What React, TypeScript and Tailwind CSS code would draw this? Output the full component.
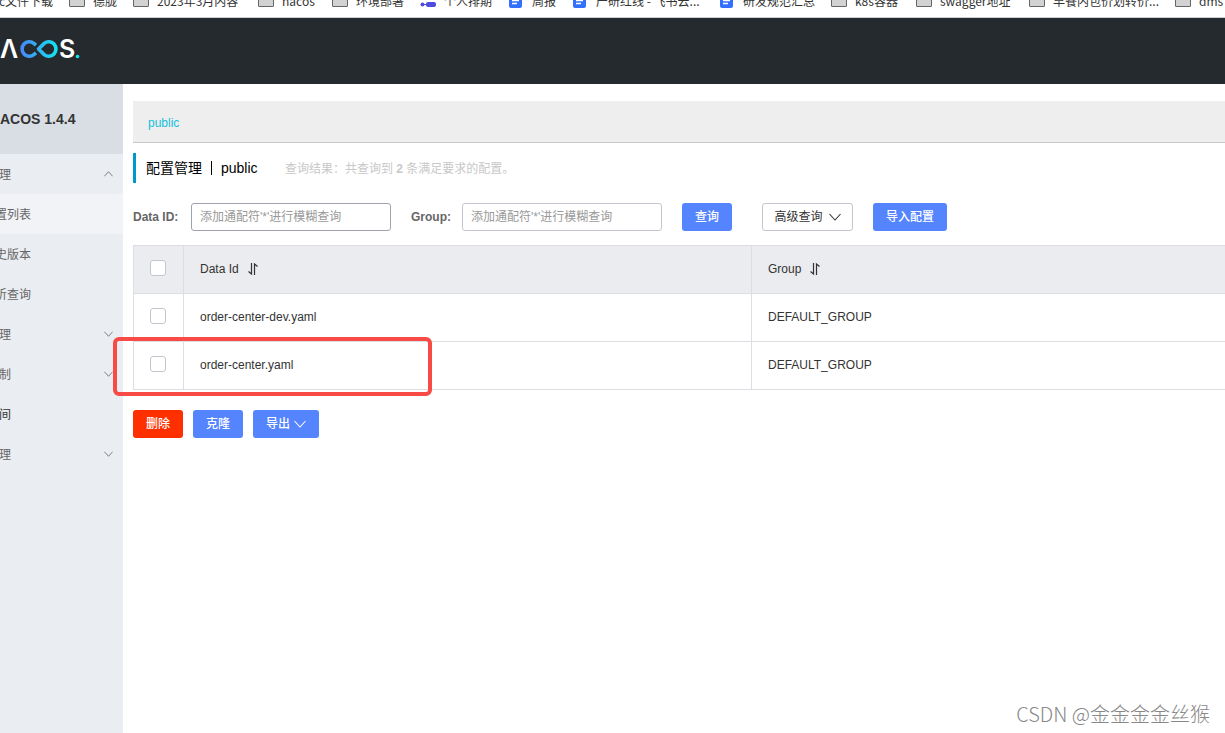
type Bookmark = { label: string; icon: 'folder' | 'doc' | 'plan'; width: string };

const bookmarks: Bookmark[] = [
  { label: '德胧', icon: 'folder', width: 'w-[64px]' },
  { label: '2023年3月内容', icon: 'folder', width: 'w-[125px]' },
  { label: 'nacos', icon: 'folder', width: 'w-[74px]' },
  { label: '环境部署', icon: 'folder', width: 'w-[88px]' },
  { label: '个人排期', icon: 'plan', width: 'w-[88px]' },
  { label: '周报', icon: 'doc', width: 'w-[64px]' },
  { label: '产研红线 - 飞书云...', icon: 'doc', width: 'w-[147px]' },
  { label: '研发规范汇总', icon: 'doc', width: 'w-[112px]' },
  { label: 'k8s容器', icon: 'folder', width: 'w-[85px]' },
  { label: 'swagger地址', icon: 'folder', width: 'w-[113px]' },
  { label: '早餐内包价划转价...', icon: 'folder', width: 'w-[146px]' },
  { label: 'dms', icon: 'folder', width: 'w-[64px]' },
];

type MenuItem = { label: string; state?: 'open' | 'closed'; active?: boolean; child?: boolean; dark?: boolean };

const menu: MenuItem[] = [
  { label: '理', state: 'open' },
  { label: '置列表', child: true, active: true },
  { label: '史版本', child: true },
  { label: '听查询', child: true },
  { label: '理', state: 'closed' },
  { label: '制', state: 'closed' },
  { label: '间', dark: true },
  { label: '理', state: 'closed' },
];

const configs = [
  { dataId: 'order-center-dev.yaml', group: 'DEFAULT_GROUP' },
  { dataId: 'order-center.yaml', group: 'DEFAULT_GROUP' },
];

function BookmarkIcon({ icon }: { icon: Bookmark['icon'] }) {
  if (icon === 'folder') {
    return <span className="mb-0.5 h-3.5 w-4 shrink-0 rounded-[1px] border border-[#666] bg-[#d2d2d2]" />;
  }
  if (icon === 'doc') {
    return (
      <svg className="mb-0.5 h-4 w-4 shrink-0" viewBox="0 0 16 16">
        <rect x="1" y="0" width="13" height="16" rx="2" fill="#3370ff" />
        <path d="M4 8.5h7M4 11.5h5" stroke="#fff" strokeWidth="1.3" />
      </svg>
    );
  }
  return (
    <svg className="mb-0.5 h-4 w-4 shrink-0" viewBox="0 0 16 16">
      <circle cx="2.5" cy="12.5" r="2" fill="#4e4bdf" />
      <path d="M3 12.5h4" stroke="#4e4bdf" />
      <rect x="6" y="10" width="10" height="5" rx="2" fill="#4e4bdf" />
    </svg>
  );
}

function Logo() {
  return (
    <svg className="h-6 w-[84px]" viewBox="0 0 84 24" role="img" aria-label="Nacos">
      <defs>
        <linearGradient id="loop" gradientUnits="userSpaceOnUse" x1="19" y1="0" x2="58" y2="0">
          <stop offset="0" stopColor="#4b83fb" />
          <stop offset="1" stopColor="#12e6ee" />
        </linearGradient>
      </defs>
      <text x="0" y="21" fontSize="25" className="fill-white font-['Inter',sans-serif] font-semibold">Λ</text>
      <g fill="none" stroke="url(#loop)" strokeWidth="3.6">
        <path d="M36 8.2L33.8 6.4A7.2 7.2 0 1 0 33.8 17.6L36 15.8" />
        <path d="M38.5 12L44.2 6.4A7.2 7.2 0 1 1 44.2 17.6Z" strokeLinejoin="round" />
      </g>
      <text x="59" y="21" fontSize="25" className="fill-white font-['Inter',sans-serif] font-semibold">S</text>
      <circle cx="77.5" cy="19.5" r="1.8" fill="#12e6ee" />
    </svg>
  );
}

function SortIcon() {
  return (
    <svg className="h-3.5 w-3" viewBox="0 0 12 14" fill="none" stroke="#333">
      <path d="M4.5 1v11L1.5 9.5" strokeWidth="1.2" />
      <path d="M7.5 13V2L10.5 4.5" strokeWidth="1.2" />
    </svg>
  );
}

function Chevron({ className }: { className: string }) {
  return (
    <svg className={className} viewBox="0 0 12 8" fill="none" stroke="currentColor" strokeWidth="1.1">
      <path d="M.5 1L6 7L11.5 1" />
    </svg>
  );
}

function Checkbox({ label }: { label: string }) {
  return (
    <input type="checkbox" aria-label={label}
      className="-mt-1 ml-4 block h-4 w-4 appearance-none rounded-[3px] border border-[#c4c6cf] bg-white checked:bg-[#5584ff]" />
  );
}

export default function App() {
  return (
    <div className="relative flex min-h-screen flex-col overflow-hidden bg-white font-['Liberation_Sans','Noto_Sans_CJK_SC',sans-serif] text-xs text-[#333]">
      {/* Bookmarks bar */}
      <nav className="flex h-[18px] items-start overflow-hidden border-b border-[#d0d0d0] font-['Noto_Sans_CJK_SC',sans-serif]">
        <a href="#" className="-mt-2 flex w-[69px] shrink-0 justify-end pr-4 leading-[18px] whitespace-nowrap">c文件下载</a>
        {bookmarks.map(b => (
          <a key={b.label} href="#" className={`-mt-2 flex shrink-0 items-center gap-2 leading-[18px] whitespace-nowrap ${b.width}`}>
            <BookmarkIcon icon={b.icon} />
            {b.label}
          </a>
        ))}
      </nav>

      {/* Header */}
      <header className="flex h-[66px] items-center bg-[#252a2f] pb-1">
        <Logo />
      </header>

      <div className="flex flex-1">
        {/* Sidebar */}
        <aside className="w-[123px] shrink-0 overflow-hidden bg-[#eaedf1]">
          <h1 className="flex h-[70px] items-center bg-[#d9dde4] text-sm font-bold whitespace-nowrap">ACOS 1.4.4</h1>
          <ul>
            {menu.map((m, i) => (
              <li key={i}>
                <a href="#" className={`flex h-10 items-center justify-between pt-0.5 pr-2.5 ${m.active ? 'bg-[#f1f3f7]' : ''} ${m.dark ? 'text-[#333]' : 'text-[#666]'}`}>
                  <span className={`flex shrink-0 justify-end whitespace-nowrap ${m.child ? 'w-[31px]' : 'w-[11px]'}`}>{m.label}</span>
                  {m.state === 'open' && <Chevron className="mb-0.5 h-1.5 w-[9px] rotate-180" />}
                  {m.state === 'closed' && <Chevron className="mb-0.5 h-1.5 w-[9px]" />}
                </a>
              </li>
            ))}
          </ul>
        </aside>

        {/* Content */}
        <main className="min-w-0 flex-1 pt-[17px] pl-2.5">
          <div className="flex h-[42px] items-center border-b border-[#c8c8c8] bg-[#eee] px-[15px] pt-0.5">
            <a href="#" className="text-[#13c0dc]">public</a>
          </div>

          <div className="mt-2.5 flex h-[30px] items-center border-l-[3px] border-[#09c] pl-2.5">
            <h2 className="flex w-[113px] items-center text-sm text-black">
              配置管理
              <span className="mx-[9px] h-3.5 border-l border-black" />
              public
            </h2>
            <p className="ml-[26px] pt-0.5 text-[#c8c8c8]">查询结果：共查询到 <strong>2</strong> 条满足要求的配置。</p>
          </div>

          <form className="mt-5 flex h-7 items-center" onSubmit={e => e.preventDefault()}>
            <label htmlFor="dataId" className="w-[58px] font-bold text-[#666]">Data ID:</label>
            <input id="dataId" placeholder="添加通配符'*'进行模糊查询"
              className="h-7 w-[200px] rounded-[3px] border border-[#a0a2ad] px-2 placeholder:text-[#999]" />
            <label htmlFor="group" className="ml-5 w-[51px] font-bold text-[#666]">Group:</label>
            <input id="group" placeholder="添加通配符'*'进行模糊查询"
              className="h-7 w-[200px] rounded-[3px] border border-[#c4c6cf] px-2 placeholder:text-[#999]" />
            <button type="submit" className="ml-5 h-7 w-[50px] rounded-[3px] bg-[#5584ff] font-medium text-white">查询</button>
            <button type="button" className="ml-[30px] flex h-7 w-[91px] items-center justify-center gap-1.5 rounded-[3px] border border-[#c4c6cf]">
              高级查询
              <Chevron className="h-2 w-3" />
            </button>
            <button type="button" className="ml-5 h-7 w-[74px] rounded-[3px] bg-[#5584ff] font-medium text-white">导入配置</button>
          </form>

          <table className="mt-3.5 w-full table-fixed border-collapse text-left">
            <thead className="bg-[#ebecf0]">
              <tr className="h-12">
                <th className="w-[50px] border border-[#dcdee3]"><Checkbox label="全选" /></th>
                <th className="w-[568px] border border-[#dcdee3] px-4 pb-0.5 font-normal">
                  <span className="flex items-center gap-2">Data Id <SortIcon /></span>
                </th>
                <th className="border-y border-[#dcdee3] px-4 pb-0.5 font-normal">
                  <span className="flex items-center gap-2">Group <SortIcon /></span>
                </th>
              </tr>
            </thead>
            <tbody>
              {configs.map(c => (
                <tr key={c.dataId} className="h-12">
                  <td className="border border-[#dcdee3]"><Checkbox label={c.dataId} /></td>
                  <td className="border border-[#dcdee3] px-4 pb-0.5">{c.dataId}</td>
                  <td className="border-y border-[#dcdee3] px-4 pb-0.5">{c.group}</td>
                </tr>
              ))}
            </tbody>
          </table>

          <div className="mt-5 flex gap-2.5 font-medium text-white">
            <button className="h-7 w-[50px] rounded-[3px] bg-[#ff3000]">删除</button>
            <button className="h-7 w-[50px] rounded-[3px] bg-[#5584ff]">克隆</button>
            <button className="flex h-7 w-[66px] items-center justify-center gap-1 rounded-[3px] bg-[#5584ff]">
              导出
              <Chevron className="h-2 w-3" />
            </button>
          </div>
        </main>
      </div>

      {/* Highlight around the second row */}
      <div className="pointer-events-none absolute top-[337px] left-[113px] h-[59px] w-[319px] rounded-md border-4 border-[#f84b46]" />

      <div className="absolute right-[15px] bottom-[5px] font-['Noto_Sans_CJK_SC',sans-serif] text-xl font-light text-[#888]">CSDN @金金金金丝猴</div>
    </div>
  );
}
